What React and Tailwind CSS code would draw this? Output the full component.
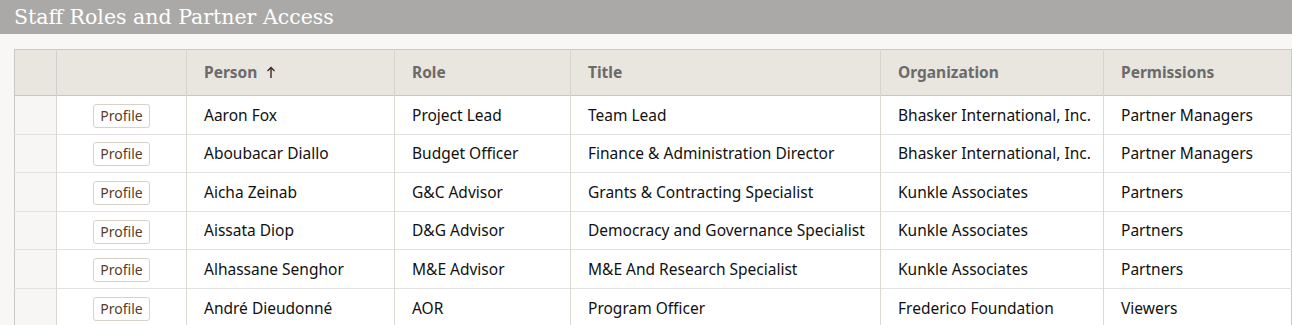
import React from 'react'

const ROWS = [
  { person: 'Aaron Fox', role: 'Project Lead', title: 'Team Lead', org: 'Bhasker International, Inc.', perm: 'Partner Managers' },
  { person: 'Aboubacar Diallo', role: 'Budget Officer', title: 'Finance & Administration Director', org: 'Bhasker International, Inc.', perm: 'Partner Managers' },
  { person: 'Aicha Zeinab', role: 'G&C Advisor', title: 'Grants & Contracting Specialist', org: 'Kunkle Associates', perm: 'Partners' },
  { person: 'Aissata Diop', role: 'D&G Advisor', title: 'Democracy and Governance Specialist', org: 'Kunkle Associates', perm: 'Partners' },
  { person: 'Alhassane Senghor', role: 'M&E Advisor', title: 'M&E And Research Specialist', org: 'Kunkle Associates', perm: 'Partners' },
  { person: 'André Dieudonné', role: 'AOR', title: 'Program Officer', org: 'Frederico Foundation', perm: 'Viewers' },
]

const COLS = [
  { key: 'person', label: 'Person', w: 'w-[208px]', sorted: true },
  { key: 'role', label: 'Role', w: 'w-[176px]' },
  { key: 'title', label: 'Title', w: 'w-[310px]' },
  { key: 'org', label: 'Organization', w: 'w-[223px]' },
  { key: 'perm', label: 'Permissions', w: '' },
]

function SortArrow() {
  return (
    <svg width="10" height="13" viewBox="0 0 10 13" className="inline-block ml-[9px] -mt-[3px]">
      <path d="M5 12V1.5M1.5 5L5 1.5L8.5 5" fill="none" stroke="#3b2a24" strokeWidth="1.4" />
    </svg>
  )
}

export default function App() {
  return (
    <div className="w-[1292px] h-[325px] overflow-hidden bg-[#f8f7f5]" style={{ fontFamily: '"Noto Sans", "Open Sans", sans-serif' }}>
      {/* Title bar */}
      <div className="h-[34px] bg-[#aaa9a7] flex items-center pl-[14px]">
        <h1 className="text-white text-[20.5px] leading-none" style={{ fontFamily: '"DejaVu Serif", "Liberation Serif", serif' }}>
          Staff Roles and Partner Access
        </h1>
      </div>

      <div className="pt-[15px] pl-[14px]">
        <table className="w-[1278px] table-fixed border-collapse border border-[#c9c9c9] text-[15.5px]">
          <colgroup>
            <col className="w-[42px]" />
            <col className="w-[130px]" />
            {COLS.map(c => <col key={c.key} className={c.w} />)}
          </colgroup>
          <thead>
            <tr className="h-[46px] bg-[#e9e5df] border-b border-[#c3c6cc]">
              <th className="border-r border-[#d2d0cc]"></th>
              <th className="border-r border-[#d8d3cb]"></th>
              {COLS.map(c => (
                <th key={c.key} className="text-left font-bold text-[#6b6b6b] pl-[17px] border-r border-[#d8d3cb] last:border-r-0">
                  {c.label}
                  {c.sorted && <SortArrow />}
                </th>
              ))}
            </tr>
          </thead>
          <tbody>
            {ROWS.map(r => (
              <tr key={r.person} className="h-[38.6px] border-b border-[#e2e2e2]">
                <td className="bg-[#f7f6f4] border-r border-[#d8d8d8]"></td>
                <td className="bg-white text-center border-r border-[#ddd8d0] pt-[2px]">
                  <button className="h-[24px] px-[6px] text-[14px] leading-none text-[#5b3b2b] bg-white border border-[#d9d2c6] rounded-[3px]">
                    Profile
                  </button>
                </td>
                {COLS.map(c => (
                  <td key={c.key} className="bg-white text-[#111] pl-[17px] pt-[1px] border-r border-[#ddd8d0] last:border-r-0 whitespace-nowrap">
                    {r[c.key]}
                  </td>
                ))}
              </tr>
            ))}
          </tbody>
        </table>
      </div>
    </div>
  )
}
